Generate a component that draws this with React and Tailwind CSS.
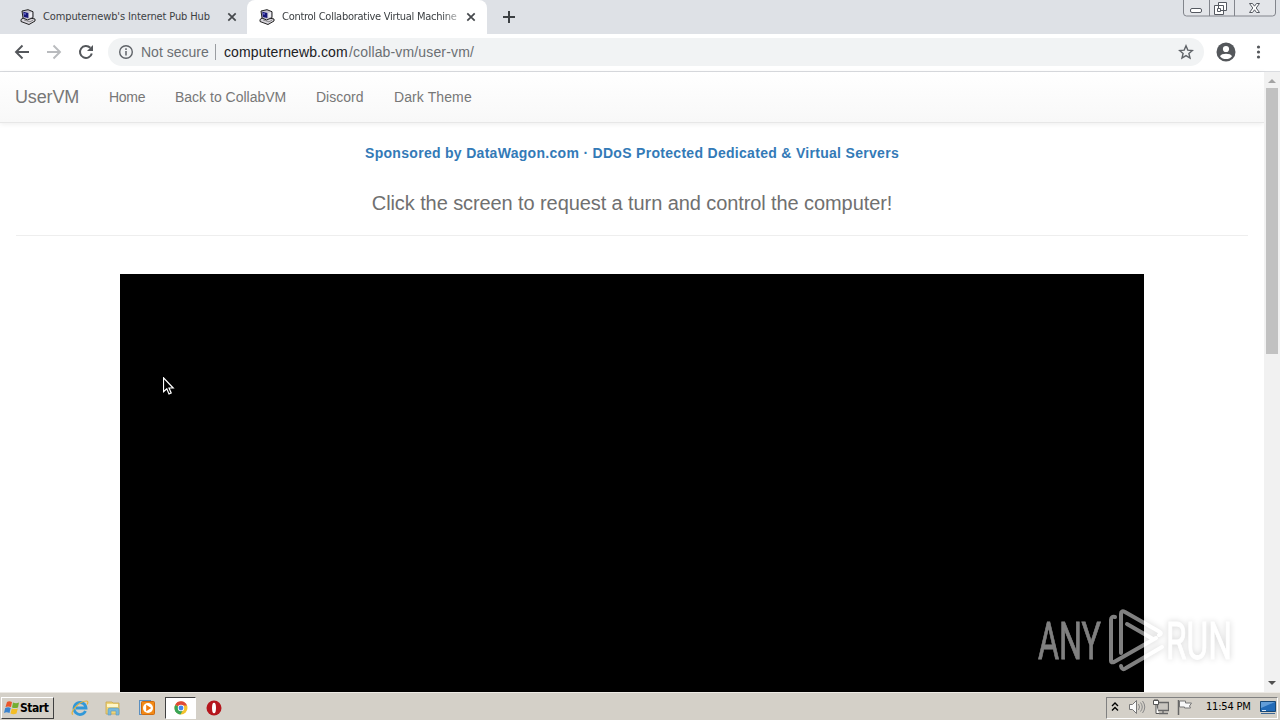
import React from "react";

const tahoma = "font-['DejaVu_Sans_Condensed','DejaVu_Sans',sans-serif] [font-stretch:condensed]";
const arial = "font-['Liberation_Sans',sans-serif]";

const ComputerIcon = () => (
  <svg className="w-4 h-4 shrink-0" viewBox="0 0 16 16">
    <path d="M1 10.5 5 8l10 2v2l-6 3.5-8-3z" fill="#d8d5dc" stroke="#222" strokeWidth="1" />
    <path d="M2 2 8 .7l5 2v6L7.5 11 3 9z" fill="#c4c2cd" stroke="#222" strokeWidth="1" />
    <path d="m3.3 2.8 5 1.3v5L3.8 8z" fill="#161679" />
    <path d="m4.2 4 1.6.3v1.5L4.3 5.4z" fill="#7777d8" />
    <path d="m9.3 4 2.7-1v4.8L9.3 9z" fill="#eeedf2" />
    <path d="m4 11 6 1.8 3-1.6" fill="none" stroke="#777" strokeWidth=".8" />
  </svg>
);

const CloseIcon = () => (
  <svg className="w-4 h-4 shrink-0" viewBox="0 0 16 16">
    <path d="m4.3 4.3 7.4 7.4m0-7.4-7.4 7.4" stroke="#45484c" strokeWidth="1.7" />
  </svg>
);

const TabStrip = () => (
  <div className={`${tahoma} flex h-[34px] bg-[#dee1e6] overflow-hidden text-[11px] text-[#3c4043] whitespace-nowrap`}>
    <div className="flex items-center w-[247px] pl-[20px] pr-[7px] shrink-0">
      <ComputerIcon />
      <span className="ml-[7px] w-[181px] pt-px tracking-[-0.12px]">
        Computernewb's Internet Pub Hub
      </span>
      <CloseIcon />
    </div>
    <div className="flex items-center w-[240px] pl-[12px] pr-[8px] shrink-0 bg-white rounded-t-lg">
      <ComputerIcon />
      <span className="ml-[7px] w-[176px] mr-[5px] pt-px tracking-[-0.27px] [mask-image:linear-gradient(to_right,black_160px,transparent_184px)]">
        Control Collaborative Virtual Machine
      </span>
      <CloseIcon />
    </div>
    <svg className="w-[14px] h-[14px] ml-[15px] mt-[10px]" viewBox="0 0 14 14">
      <path d="M7 1v12M1 7h12" stroke="#3c4043" strokeWidth="2" />
    </svg>
    <svg className="w-[94px] h-[18px] ml-auto mr-[3px]" viewBox="0 0 94 18">
      <path d="M.5 0v13q0 3 3 3h86q3 0 3-3V0M26.500 0v16M51.500 0v16" fill="#e3e5e9" stroke="#82858c" />
      <rect x="7.500" y="8.500" width="11" height="4" rx="1.500" fill="#fff" stroke="#555961" />
      <path d="M35.500 2.500h8v8h-8zM31.500 5.500h9v9h-9z" fill="#fff" stroke="#555961" />
      <path d="M34.500 8.500h3v3h-3z" fill="#fff" stroke="#555961" />
      <path d="M66.500 3.500h3l2 2.700 2-2.700h3l-3.300 4.500 3.300 4.500h-3l-2-2.700-2 2.700h-3l3.300-4.500z" fill="#fff" stroke="#555961" />
    </svg>
  </div>
);

const Toolbar = () => (
  <div className={`${arial} flex items-center h-[38px] bg-white border-b border-[#dadce0] text-[14px]`}>
    <svg className="w-4 h-4 ml-[14px] mt-[-1px]" viewBox="0 0 16 16">
      <path d="M15 8H2m6.500-6.500L2 8l6.500 6.500" fill="none" stroke="#54575b" strokeWidth="1.900" />
    </svg>
    <svg className="w-4 h-4 ml-[16px] mt-[-1px]" viewBox="0 0 16 16">
      <path d="M1 8h13M7.500 1.500 14 8l-6.500 6.500" fill="none" stroke="#b9bbbe" strokeWidth="1.900" />
    </svg>
    <svg className="w-4 h-4 ml-[16px] mt-[-1px]" viewBox="0 0 16 16">
      <path d="M13.800 9.500A6 6 0 1 1 12.300 3.800" fill="none" stroke="#54575b" strokeWidth="2" />
      <path d="M15 1v6H9z" fill="#54575b" />
    </svg>
    <div className="flex items-center h-7 w-[1096px] ml-[14px] mt-[-1px] pl-[10px] pr-[10px] rounded-full bg-[#f1f3f4]">
      <svg className="w-4 h-4" viewBox="0 0 16 16">
        <circle cx="8" cy="8" r="6.300" fill="none" stroke="#5f6368" strokeWidth="1.400" />
        <path d="M8 7v4.500M8 4.300V6" stroke="#5f6368" strokeWidth="1.500" />
      </svg>
      <span className="ml-[7px] w-[67px] text-[#6b6f73] whitespace-nowrap">Not secure</span>
      <span className="w-px h-4 ml-[7px] mr-[8px] bg-[#9a9da1]"></span>
      <span className="w-[125px] text-[#202124] whitespace-nowrap tracking-[0.1px]">computernewb.com</span>
      <span className="text-[#6b6f73] whitespace-nowrap tracking-[0.15px]">/collab-vm/user-vm/</span>
      <svg className="w-4 h-4 ml-auto" viewBox="0 0 16 16">
        <path d="m8 1.800 1.800 4.300 4.600.400-3.500 3 1.100 4.500L8 11.600 4 14l1.100-4.500-3.500-3 4.600-.400z" fill="none" stroke="#5f6368" strokeWidth="1.400" />
      </svg>
    </div>
    <svg className="w-[20px] h-[20px] ml-[12px] mt-[-1px]" viewBox="0 0 20 20">
      <circle cx="10" cy="10" r="9.500" fill="#54575b" />
      <circle cx="10" cy="7" r="3.100" fill="#fff" />
      <path d="M4 14.200c1-3.300 11-3.300 12 0-2.800 3.800-9.200 3.800-12 0z" fill="#fff" />
    </svg>
    <svg className="w-4 h-4 ml-[15px] mt-[-1px]" viewBox="0 0 16 16" fill="#54575b">
      <circle cx="7.500" cy="3" r="1.600" />
      <circle cx="7.500" cy="8" r="1.600" />
      <circle cx="7.500" cy="13" r="1.600" />
    </svg>
  </div>
);

const Navbar = () => (
  <nav className="flex items-center h-[51px] pl-[15px] bg-linear-to-b from-white to-[#f8f8f8] border-b border-[#e7e7e7] shadow-[0_1px_5px_rgba(0,0,0,0.075)] text-[14px] text-[#777] whitespace-nowrap">
    <span className="w-[94px] text-[18px] tracking-[-0.15px]">UserVM</span>
    <span className="w-[66px] tracking-[-0.3px]">Home</span>
    <span className="w-[141px]">Back to CollabVM</span>
    <span className="w-[78px]">Discord</span>
    <span className="tracking-[0.1px]">Dark Theme</span>
  </nav>
);

const Scrollbar = () => (
  <div className="flex flex-col items-center w-4 bg-[#f1f1f1]">
    <svg className="w-4 h-4" viewBox="0 0 16 16">
      <path d="m4 11 4-4 4 4z" fill="#a3a3a3" />
    </svg>
    <div className="w-3 h-[266px] bg-[#c1c1c1]"></div>
    <svg className="w-4 h-4 mt-auto" viewBox="0 0 16 16">
      <path d="m4 5 4 4 4-4z" fill="#505050" />
    </svg>
  </div>
);

const Watermark = () => (
  <svg className="absolute left-[1029px] top-[599px] w-[220px] h-[80px] opacity-50 drop-shadow-[0_0_3px_rgba(0,0,0,0.35)]" viewBox="0 0 220 80">
    <g fill="#fff" stroke="#fff" strokeWidth=".8" fontFamily="Roboto, sans-serif" fontSize="51">
      <text x="9" y="60" textLength="63" lengthAdjust="spacingAndGlyphs">ANY</text>
      <text x="137" y="60" textLength="66" lengthAdjust="spacingAndGlyphs">RUN</text>
    </g>
    <g fill="none" stroke="#fff" strokeWidth="4" strokeLinejoin="round" strokeLinecap="round">
      <path d="M86 18q-4-1-4 3v41q0 2 3 1l42-24" />
      <path d="M92 54V15q0-4 4-2l35 20q2 1.500-1 3" />
      <path d="M98 25l26 15M92 67q1 5 5 2l36-21" />
    </g>
  </svg>
);

const Cursor = () => (
  <svg className="absolute left-[163px] top-[377px] w-3 h-[19px]" viewBox="0 0 12 19">
    <path d="M.5.8v14l3.300-3.100 2.200 5.200 2.200-1-2.200-4.900h4.200z" fill="#000" stroke="#fff" strokeWidth="1.200" />
  </svg>
);

const Taskbar = () => (
  <div className={`${tahoma} flex items-center h-7 pt-[2px] bg-[#d4d0c8] border-t border-[#ece9e4] text-[11px] text-black`}>
    <div className="flex items-center h-[22px] w-[53px] ml-[1px] pl-[2px] border border-white border-r-[#404040] border-b-[#404040] font-bold">
      <svg className="w-4 h-4 shrink-0" viewBox="0 0 16 16">
        <path d="M3 2q2-1.500 5 0L7 7Q4 6 1.500 7z" fill="#e9562c" />
        <path d="M9 2.500q3 1.500 6 0L14 7.500q-3 1-6 0z" fill="#73ae31" />
        <path d="M1.200 8q3-1.300 5.500 0l-1.200 5q-3-1.500-5.500 0z" fill="#3a83cf" />
        <path d="M7.800 8.500q3 1.200 6 0l-1.300 5q-3 1.500-6 0z" fill="#f4bd25" />
      </svg>
      <span className="text-[12px] tracking-[-0.45px]">Start</span>
    </div>
    <svg className="w-[18px] h-[18px] ml-[17px]" viewBox="0 0 18 18">
      <path d="M14.500 12A6 6 0 1 1 15 9H5" fill="none" stroke="#3298d8" strokeWidth="2.800" />
      <path d="M2 15.500C-2 14 8 2 15.500 2c2 0 1.500 2 .5 3.500" fill="none" stroke="#e8b33b" strokeWidth="1.200" />
    </svg>
    <svg className="w-[18px] h-[18px] ml-[15px]" viewBox="0 0 18 18">
      <path d="M2 3h6l1 1h6v11H2z" fill="#efd477" stroke="#c9a64c" strokeWidth=".8" />
      <path d="M3 5h11v3H3z" fill="#fff6c8" />
      <path d="M4 16v-5q0-2 2-2h7q2 0 2 2v5h-3v-4H7v4z" fill="#78b9dd" stroke="#5a98bc" strokeWidth=".6" />
    </svg>
    <svg className="w-[18px] h-[18px] ml-[16px]" viewBox="0 0 18 18">
      <rect x="1.500" y="1.500" width="11" height="14" fill="#bcd5ec" stroke="#5a8fc0" />
      <rect x="3.500" y="2.500" width="13" height="13" rx="1" fill="#f38a16" stroke="#cf6b10" />
      <circle cx="10" cy="9" r="5" fill="#fff" />
      <path d="m8.200 5.800 5 3.200-5 3.200z" fill="#f07a0c" />
    </svg>
    <div className="flex items-center justify-center w-[31px] h-[22px] ml-[9px] bg-white border border-[#404040] border-r-white border-b-white">
      <svg className="w-[14px] h-[14px]" viewBox="0 0 14 14">
        <circle cx="7" cy="7" r="6.500" fill="#f3c32f" />
        <path d="M7 7 1.200 3.800A6.500 6.500 0 0 1 13 4.400H7z" fill="#df4937" />
        <path d="M7 7 1.200 3.900A6.500 6.500 0 0 0 6.500 13.500L9 9z" fill="#39a456" />
        <circle cx="7" cy="7" r="3.200" fill="#fff" />
        <circle cx="7" cy="7" r="2.400" fill="#4285ee" />
      </svg>
    </div>
    <svg className="w-4 h-4 ml-[10px]" viewBox="0 0 16 16">
      <circle cx="8" cy="8" r="7.500" fill="#b5161d" />
      <ellipse cx="8" cy="8" rx="2" ry="5.300" fill="#fff" />
    </svg>
    <div className="flex items-center h-[22px] w-[172px] ml-auto mr-[2px] border border-[#808080] border-r-white border-b-white">
      <svg className="w-[8px] h-[12px] ml-[4px] mt-[-2px]" viewBox="0 0 8 12">
        <path d="m1 5 3-3 3 3M1 9.500l3-3 3 3" fill="none" stroke="#000" strokeWidth="1.400" />
      </svg>
      <svg className="w-[18px] h-4 ml-[9px] mt-[-1px]" viewBox="0 0 18 16">
        <path d="M1.500 5.500h3l4-4v13l-4-4h-3z" fill="#fafafa" stroke="#777" />
        <path d="M10.500 5q2 3 0 6M12.500 3.500q3.500 4.500 0 9M14.500 2q4.500 6 0 12" fill="none" stroke="#888" />
      </svg>
      <svg className="w-4 h-4 ml-[7px] mt-[-1px]" viewBox="0 0 16 16">
        <path d="M4.500 3.500h11v8h-11zM6 14.500h9M10 11.500v3" fill="#c9c6c0" stroke="#666" strokeWidth="1.300" />
        <path d="M.5 1.500h5v4h-5zM3 5.500v9h3" fill="#fff" stroke="#555" />
        <path d="M2 0v2m2-2v2" stroke="#555" />
      </svg>
      <svg className="w-4 h-4 ml-[8px] mt-[-1px]" viewBox="0 0 16 16">
        <path d="M1.500 1v15" stroke="#666" strokeWidth="1.500" />
        <path d="M2.500 2h6v2h6l-2 3 1 2h-6V8h-5z" fill="#f8f8f8" stroke="#777" />
      </svg>
      <span className="w-[47px] ml-[13px] tracking-[-0.2px] whitespace-nowrap">11:54 PM</span>
      <svg className="w-4 h-[14px] ml-[7px]" viewBox="0 0 16 14">
        <path d="M.5.500h15v10H.5z" fill="#226bb8" stroke="#174877" />
        <path d="M1 1h14L1 7z" fill="#629dd8" />
        <path d="M1 12.500h14" stroke="#3d6895" />
        <path d="M2 9.500h4" stroke="#d5e6f5" />
      </svg>
    </div>
  </div>
);

const App = () => (
  <div className="relative flex flex-col w-[1280px] h-[720px] overflow-hidden bg-white">
    <TabStrip />
    <Toolbar />
    <div className="flex h-[620px]">
      <main className={`${arial} w-[1264px]`}>
        <Navbar />
        <div className="px-4 text-center whitespace-nowrap">
          <p className="pt-[20px] text-[14px] leading-[20px] font-bold text-[#337ab7] tracking-[0.3px]">
            Sponsored by DataWagon.com · DDoS Protected Dedicated &amp; Virtual Servers
          </p>
          <h4 className="mt-[28px] text-[20px] leading-[24px] text-[#707070] tracking-[-0.09px]">
            Click the screen to request a turn and control the computer!
          </h4>
          <hr className="mt-[20px] border-[#eee]" />
        </div>
        <div className="w-[1024px] h-[418px] mx-auto mt-[38px] bg-black"></div>
      </main>
      <Scrollbar />
    </div>
    <Taskbar />
    <Watermark />
    <Cursor />
  </div>
);

export default App;
